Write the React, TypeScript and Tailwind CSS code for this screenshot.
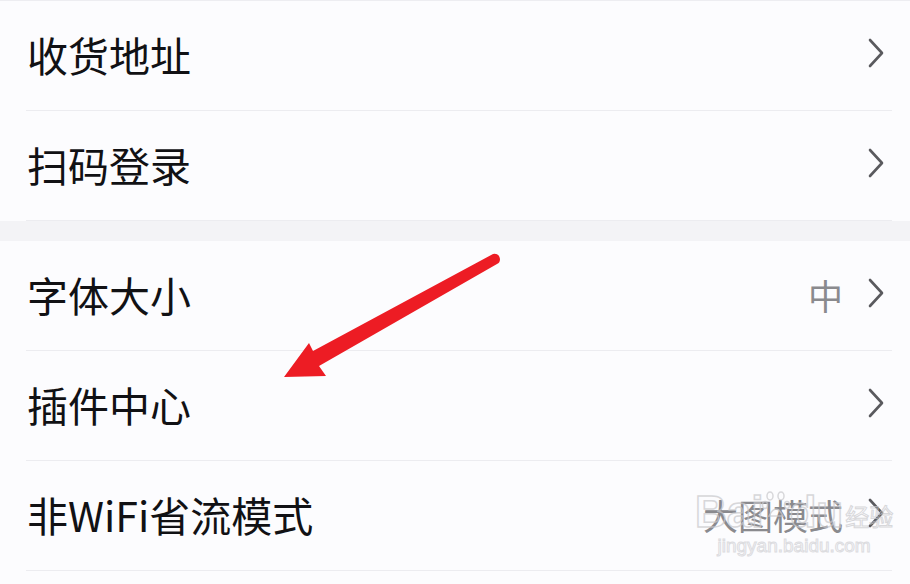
import React from "react";

const font = { fontFamily: '"Noto Sans CJK SC", "Noto Sans", sans-serif' };

function Chevron() {
  return (
    <svg width="18" height="30" viewBox="0 0 18 30" className="mb-[3px]">
      <path d="M3 2 L15 15 L3 28" fill="none" stroke="#5a5a5e" strokeWidth="2.6" strokeLinecap="round" strokeLinejoin="round" />
    </svg>
  );
}

function Row({ label, value }: { label: string; value?: string }) {
  return (
    <div className="relative">
      <div className="h-[109px] flex items-center pl-[27px] pr-[25px] pb-[2px]">
        <span className="text-[41px] leading-none text-[#111114] flex-1">{label}</span>
        {value && <span className="text-[35px] leading-none text-[#8a8a8e] mr-[24px]">{value}</span>}
        <Chevron />
      </div>
      <div className="h-px bg-[#ececf0] ml-[26px] mr-[18px]" />
    </div>
  );
}

export default function App() {
  return (
    <div className="w-[910px] h-[584px] bg-[#fcfcfe] overflow-hidden relative" style={font}>
      <div className="h-px bg-[#ededf1]" />
      <Row label="收货地址" />
      <Row label="扫码登录" />
      <div className="h-[20px] bg-[#f3f3f6]" />
      <Row label="字体大小" value="中" />
      <Row label="插件中心" />
      <Row label="非WiFi省流模式" value="大图模式" />

      {/* red arrow */}
      <svg className="absolute left-0 top-0 pointer-events-none" width="910" height="584">
        <path
          d="M284 377 L309 343 L313 351 L493 254 Q499 253 500 259 Q500 263 497 264 L319 366 L326 376 Z"
          fill="#ed1c24"
        />
      </svg>

      {/* watermark */}
      <div className="absolute left-[695px] top-[490px] flex flex-col items-center pointer-events-none opacity-70">
        <div className="flex items-end leading-none" style={{ fontFamily: '"Liberation Sans", sans-serif' }}>
          <span className="text-[44px] font-bold text-transparent" style={{ WebkitTextStroke: "1.5px #c8c8cc" }}>Bai</span>
          <svg width="30" height="30" viewBox="0 0 30 30" className="mb-[14px] -mx-[2px]">
            <g fill="none" stroke="#c8c8cc" strokeWidth="1.5">
              <ellipse cx="9" cy="6" rx="3" ry="4" />
              <ellipse cx="20" cy="6" rx="3" ry="4" />
              <ellipse cx="4" cy="15" rx="2.5" ry="3.5" />
              <ellipse cx="26" cy="15" rx="2.5" ry="3.5" />
              <path d="M8 26 Q15 12 22 26 Z" />
            </g>
          </svg>
          <span className="text-[44px] font-bold text-transparent" style={{ WebkitTextStroke: "1.5px #c8c8cc" }}>du</span>
          <span className="text-[24px] text-transparent ml-[2px] mb-[6px]" style={{ WebkitTextStroke: "1px #c8c8cc", fontFamily: '"Noto Sans CJK SC", sans-serif' }}>经验</span>
        </div>
        <span className="text-[19px] leading-none text-transparent mt-[2px]" style={{ WebkitTextStroke: "1px #cfcfd3", fontFamily: '"Liberation Sans", sans-serif' }}>jingyan.baidu.com</span>
      </div>
    </div>
  );
}
